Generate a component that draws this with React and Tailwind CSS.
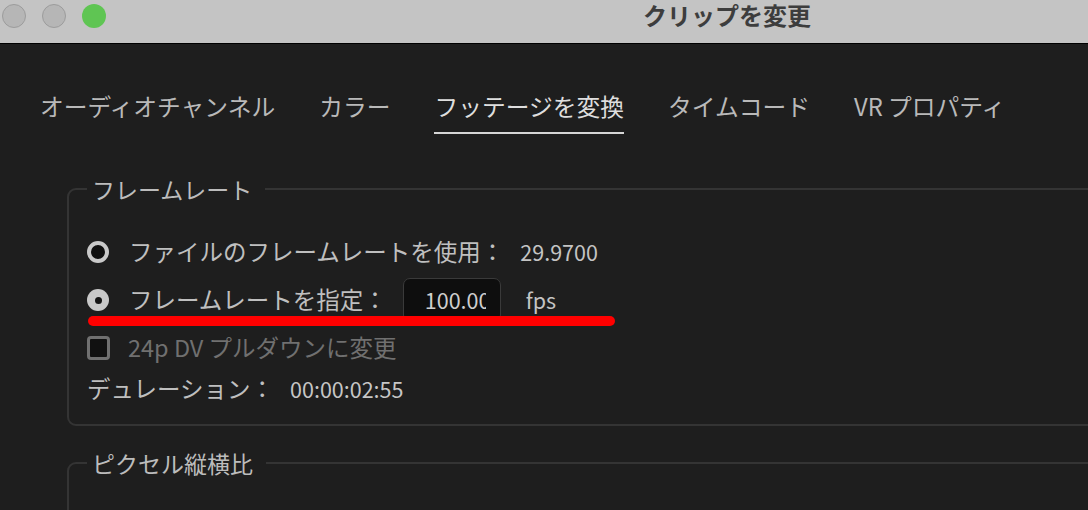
import React from "react";

const font = { fontFamily: '"Noto Sans CJK JP", "Noto Sans", sans-serif' };

const tabs = ["オーディオチャンネル", "カラー", "フッテージを変換", "タイムコード", "VR プロパティ"];

function Radio({ checked }) {
  return checked ? (
    <span className="flex h-[22px] w-[22px] items-center justify-center rounded-full bg-[#c9c9c9]">
      <span className="h-[7px] w-[7px] rounded-full bg-[#151515]" />
    </span>
  ) : (
    <span className="h-[22px] w-[22px] rounded-full border-[4px] border-[#c9c9c9] bg-[#101010]" />
  );
}

function Group({ title, children, className = "" }) {
  return (
    <fieldset className={`ml-[67px] w-[1100px] rounded-[9px] border-2 border-[#343434] pl-[18px] ${className}`}>
      <legend className="pl-[5px] pr-[13px] text-[23px] leading-[34px] text-[#bcbcbc]">{title}</legend>
      {children}
    </fieldset>
  );
}

export default function App() {
  return (
    <div className="relative h-[510px] w-[1088px] overflow-hidden bg-[#1e1e1e]" style={font}>
      {/* window chrome */}
      <div className="flex h-[44px] items-start border-b border-black bg-[#c4c4c4]">
        <div className="flex gap-[16px] pl-[2px] pt-[4px]">
          <span className="h-[24px] w-[24px] rounded-full border border-[#9c9c9c] bg-[#b6b6b6]" />
          <span className="h-[24px] w-[24px] rounded-full border border-[#9c9c9c] bg-[#b6b6b6]" />
          <span className="h-[24px] w-[24px] rounded-full bg-[#5fc553]" />
        </div>
        <div className="ml-[537px] text-[24px] font-bold leading-[30px] text-[#3d3d3d]">クリップを変更</div>
      </div>

      {/* tab strip */}
      <div className="mt-[46px] flex gap-[44px] pl-[40px]">
        {tabs.map((t) => (
          <div
            key={t}
            className={
              t === "フッテージを変換"
                ? "border-b-2 border-[#d6d6d6] pb-[10px] text-[23.75px] leading-[32px] text-[#dedede]"
                : "border-b-2 border-transparent pb-[10px] text-[23.75px] leading-[32px] text-[#b9b9b9]"
            }
          >
            {t}
          </div>
        ))}
      </div>

      <Group title="フレームレート" className="mt-[38px] pb-[18px]">
        <div className="pt-[22px]">
          <div className="flex h-[48px] items-center">
            <Radio />
            <span className="ml-[20px] text-[23.5px] text-[#bfbfbf]">ファイルのフレームレートを使用：</span>
            <span className="ml-[16px] text-[21.5px] text-[#c4c4c4]">29.9700</span>
          </div>
          <div className="flex h-[48px] items-center">
            <Radio checked />
            <span className="ml-[20px] text-[23.5px] text-[#bfbfbf]">フレームレートを指定：</span>
            <div className="ml-[16px] flex h-[44px] w-[98px] items-center overflow-hidden rounded-[7px] border-[1.5px] border-[#3a3a3a] bg-[#0e0e0e] pl-[21px]">
              <span className="w-[61px] overflow-hidden whitespace-nowrap text-[21.5px] text-[#cfcfcf]">100.00</span>
            </div>
            <span className="ml-[25px] text-[21.5px] text-[#c4c4c4]">fps</span>
          </div>
          <div className="flex h-[48px] items-center">
            <span className="h-[24px] w-[23px] rounded-[4px] border-[3.5px] border-[#707070] bg-[#111111]" />
            <span className="ml-[18px] text-[23.5px] text-[#707070]">24p DV プルダウンに変更</span>
          </div>
          <div className="flex h-[34px] items-center">
            <span className="text-[23.5px] text-[#bfbfbf]">デュレーション：</span>
            <span className="ml-[16px] text-[21.5px] text-[#c6c6c6]">00:00:02:55</span>
          </div>
        </div>
      </Group>

      <Group title="ピクセル縦横比" className="mt-[20px] h-[120px]" />

      {/* red marker stroke */}
      <div className="absolute left-[88px] top-[316px] h-[10px] w-[527px] rounded-full bg-[#ff0000]" />
    </div>
  );
}
